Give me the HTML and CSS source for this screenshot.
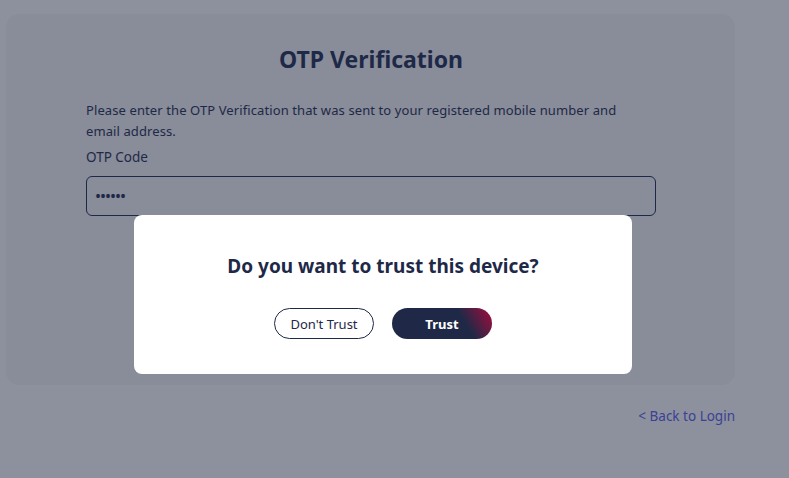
FILE: index.html
```html
<!DOCTYPE html>
<html lang="en">
<head>
<meta charset="utf-8">
<title>OTP Verification</title>
<link rel="stylesheet" href="styles.css">
</head>
<body>
<main class="page">
  <section class="card">
    <h1 class="title">OTP Verification</h1>
    <p class="desc">Please enter the OTP Verification that was sent to your registered mobile number and email address.</p>
    <label class="label" for="otp">OTP Code</label>
    <div class="input"><span class="dots">••••••</span></div>
  </section>
  <div class="footer"><a class="back" href="#">&lt; Back to Login</a></div>
</main>
<div class="modal">
  <h2 class="modal-title">Do you want to trust this device?</h2>
  <div class="actions">
    <button class="btn btn-outline">Don't Trust</button>
    <button class="btn btn-primary">Trust</button>
  </div>
</div>
</body>
</html>
```
FILE: styles.css
```css
* { box-sizing: border-box; }
html, body { margin: 0; padding: 0; }
body {
  background: #8d909d;
  font-family: "Noto Sans", "Open Sans", sans-serif;
  color: #1e2947;
  width: 789px;
  height: 478px;
  overflow: hidden;
}
.page {
  padding: 14px 0 0 6px;
  width: 735px;
}
.card {
  background: #898c99;
  border-radius: 14px;
  height: 371px;
  padding: 30px 79px 0 80px;
}
.title {
  margin: 0;
  text-align: center;
  font-size: 23px;
  font-weight: 700;
  line-height: 30px;
  color: #1e2947;
}
.desc {
  margin: 26px 0 0;
  max-width: 550px;
  font-size: 13px;
  letter-spacing: 0.1px;
  line-height: 21px;
}
.label {
  display: block;
  margin-top: 6px;
  font-size: 13.5px;
  line-height: 18px;
}
.input {
  margin-top: 10px;
  height: 40px;
  border: 1px solid #1e2947;
  border-radius: 6px;
  padding: 0 8px;
  display: flex;
  align-items: center;
}
.dots { font-size: 16px; letter-spacing: -1px; }
.footer {
  display: flex;
  justify-content: flex-end;
  padding-top: 22px;
}
.back {
  color: #3b4196;
  text-decoration: none;
  font-size: 13.5px;
  line-height: 18px;
}
.modal {
  position: absolute;
  left: 134px;
  top: 215px;
  width: 498px;
  height: 159px;
  background: #fff;
  border-radius: 8px;
  display: flex;
  flex-direction: column;
  align-items: center;
  padding-top: 38px;
}
.modal-title {
  margin: 0;
  font-size: 19px;
  line-height: 26px;
  font-weight: 700;
  color: #1e2947;
}
.actions {
  display: flex;
  gap: 18px;
  margin-top: 29px;
}
.btn {
  width: 100px;
  height: 31px;
  border-radius: 16px;
  font-family: inherit;
  font-size: 13px;
  cursor: pointer;
}
.btn-outline {
  background: #fff;
  border: 1px solid #1e2947;
  color: #1e2947;
}
.btn-primary {
  border: none;
  color: #fff;
  font-weight: 700;
  background: linear-gradient(60deg, #1f2947 0%, #1f2947 70%, #a50c3c 100%);
}
```
